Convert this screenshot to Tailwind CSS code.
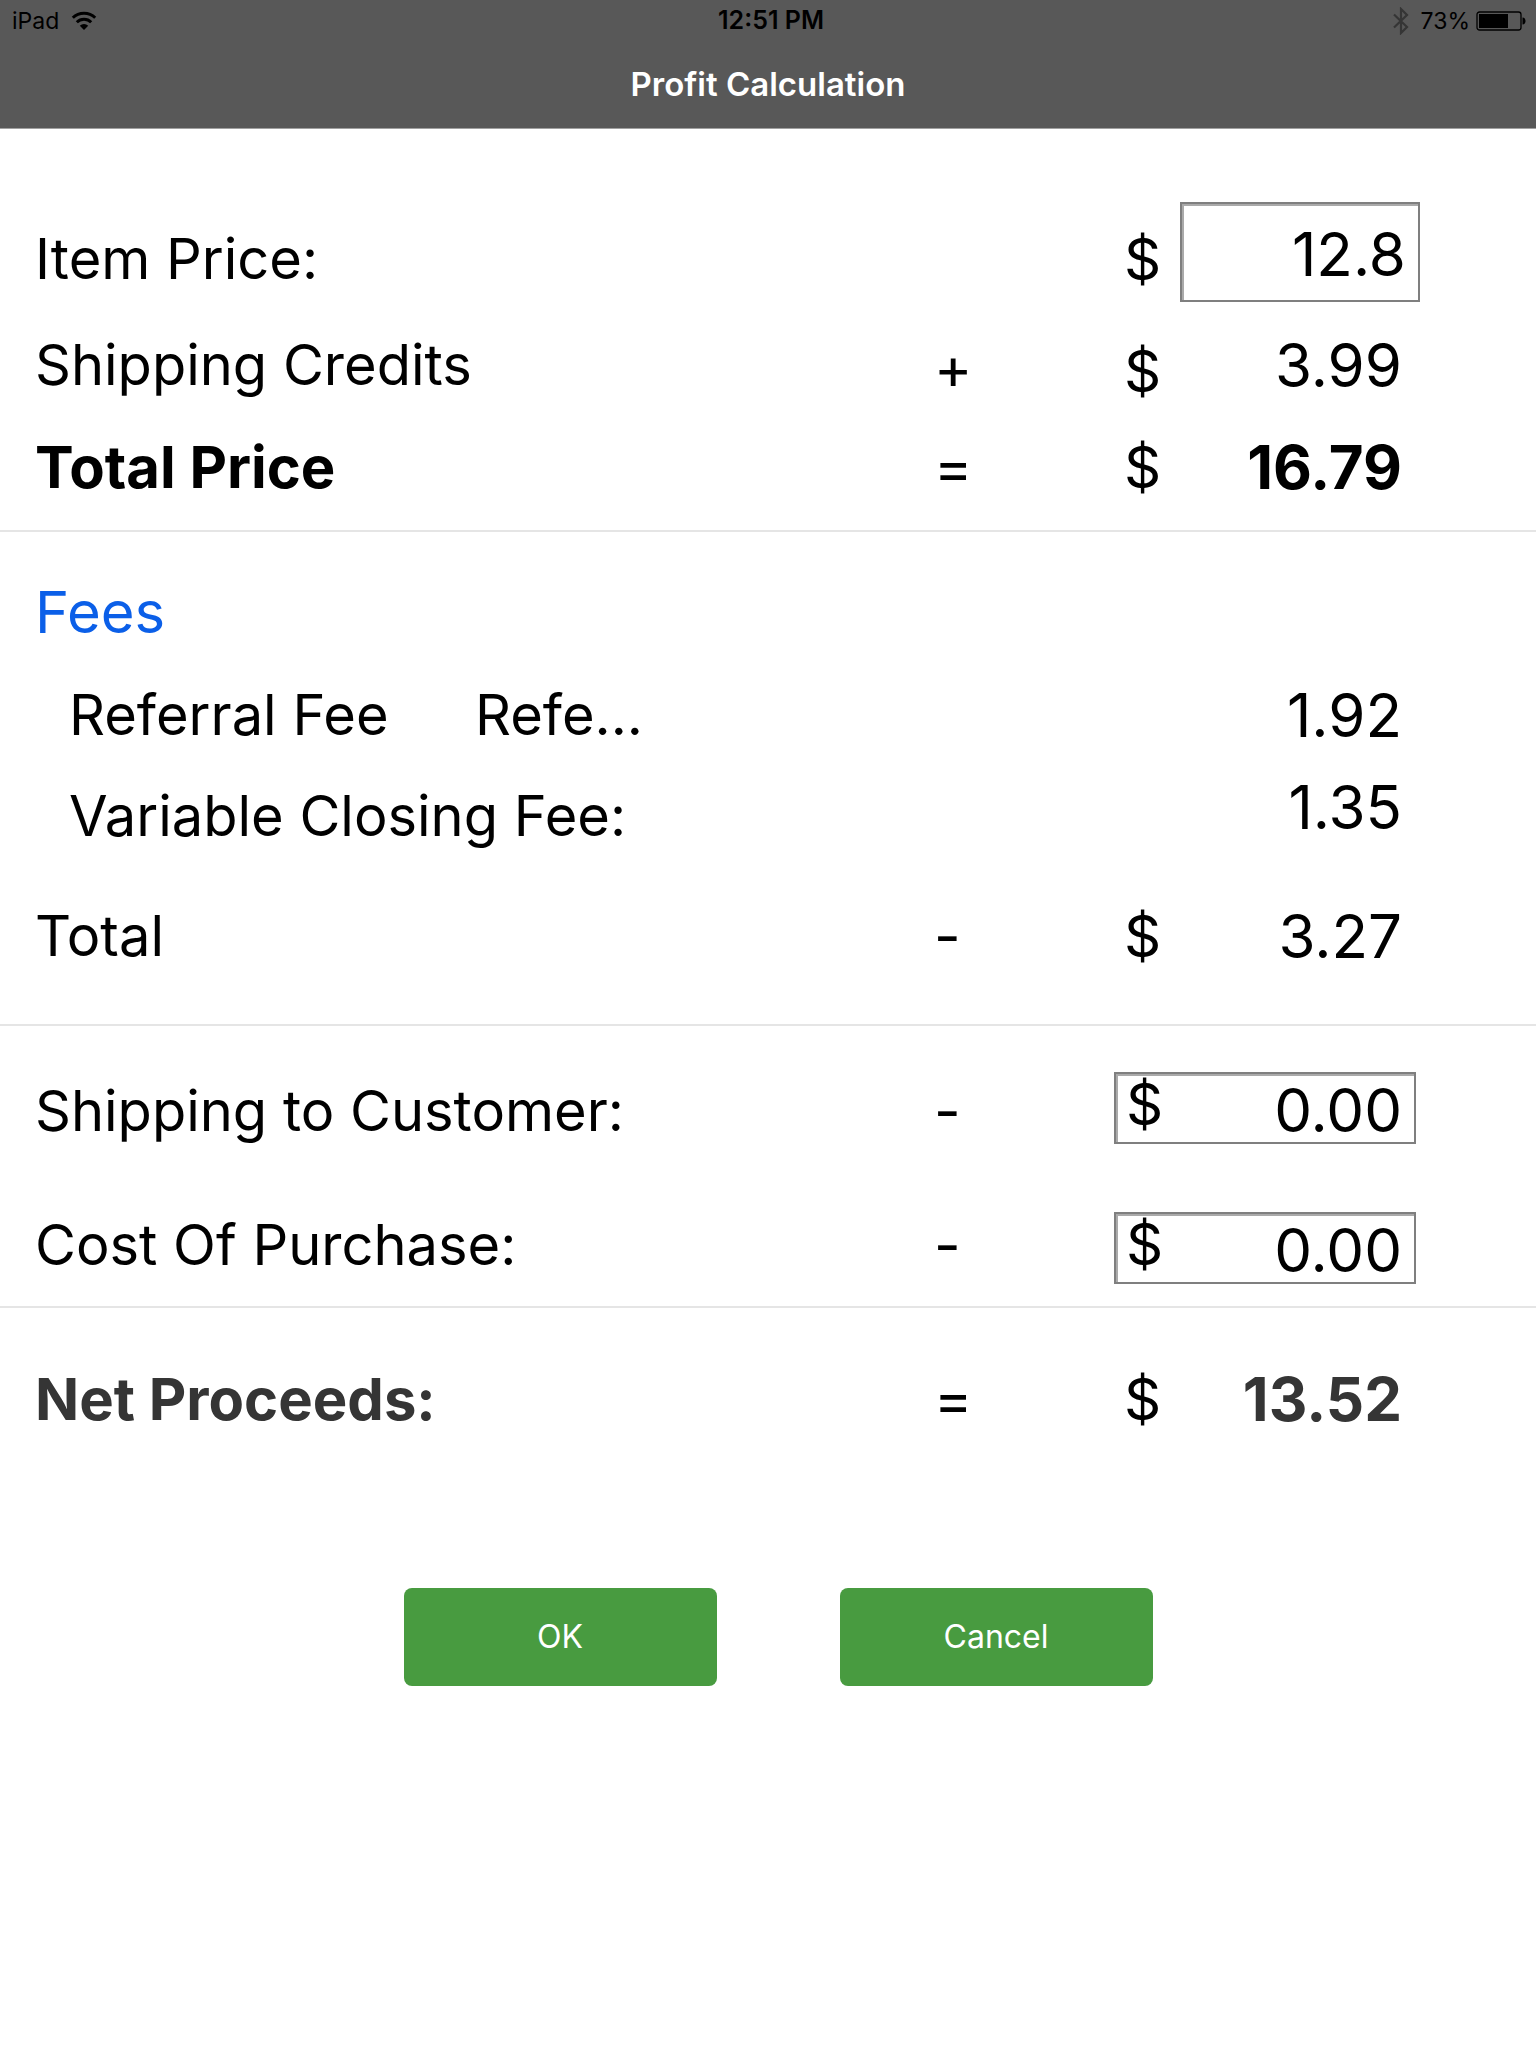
<!DOCTYPE html>
<html lang="en">
<head>
    <meta charset="UTF-8">
    <meta name="viewport" content="width=device-width, initial-scale=1.0">
    <title>Profit Calculation</title>
    <script src="https://cdn.jsdelivr.net/npm/@tailwindcss/browser@4"></script>
</head>
<body class="bg-white text-black font-['Inter','Liberation_Sans',sans-serif]">

    <header class="bg-[#585858] border-b border-[#a0a0a0]">
        <!-- Status bar -->
        <div class="grid grid-cols-[1fr_auto_1fr] items-center h-[42px] pl-3 pr-[10px] text-[23px]">
            <div class="flex items-center gap-3">
                <span>iPad</span>
                <svg class="w-[26px] h-[20px]" viewBox="0 0 26 20" fill="none" stroke="#000" stroke-width="3" aria-label="Wi-Fi">
                    <path d="M1.8 6.700a16 16 0 0 1 22.4 0"/>
                    <path d="M5.800 11.200a10.300 10.300 0 0 1 14.400 0"/>
                    <path d="M13 19l-4.200-4.300a6 6 0 0 1 8.400 0z" fill="#000" stroke="none"/>
                </svg>
            </div>
            <div class="pl-1 text-center text-[25px] font-semibold">12:51 PM</div>
            <div class="flex items-center justify-end">
                <svg class="w-4 h-[28px] mr-3" viewBox="0 0 16 28" fill="none" stroke="#353535" stroke-width="2.200" aria-label="Bluetooth">
                    <path d="M1 7.500l13 12.500-6 6V2l6 6L1 20.500"/>
                </svg>
                <span class="mr-1.5">73%</span>
                <svg class="w-[50px] h-5" viewBox="0 0 50 20" aria-label="Battery">
                    <rect x="1" y="1" width="44" height="18" rx="2.500" fill="none" stroke="#000" stroke-width="1.300"/>
                    <path d="M3 3h29v14H3z"/>
                    <path d="M46.500 6.500c4 0 4 7 0 7z"/>
                </svg>
            </div>
        </div>
        <h1 class="h-[86px] leading-[84px] text-center text-[33px] font-semibold text-white">Profit Calculation</h1>
    </header>

    <form class="text-[56px] leading-[70px]">
        <!-- Price -->
        <section class="pt-[73px] pb-7 pl-[35px] pr-[116px] border-b-2 border-[#e5e5e5]">
            <div class="grid grid-cols-[1fr_180px_66px_240px] items-center h-[114px]">
                <label for="itemPrice">Item Price:</label>
                <span></span>
                <span class="pl-2.5 text-[58px]">$</span>
                <input id="itemPrice" type="text" value="12.8" class="self-start w-full h-[100px] pt-1 pr-3 text-right text-[60px] border-2 border-[#7f7f7f] shadow-[inset_2px_2px_0_#aaaaaa] outline-none">
            </div>
            <div class="grid grid-cols-[1fr_180px_66px_240px] h-[76px] mt-[14px]">
                <span>Shipping Credits</span>
                <span class="self-center text-[58px]">+</span>
                <span class="self-end pl-2.5 text-[58px]">$</span>
                <output class="pr-[18px] text-right text-[60px]">3.99</output>
            </div>
            <div class="grid grid-cols-[1fr_180px_66px_240px] items-center h-[70px] mt-[26px]">
                <span class="text-[58px] font-bold">Total Price</span>
                <span class="text-[58px]">=</span>
                <span class="pl-2.5 text-[58px]">$</span>
                <output class="pr-[18px] text-right text-[60px] font-bold">16.79</output>
            </div>
        </section>

        <!-- Fees -->
        <section class="pt-[45px] pb-[53px] pl-[35px] pr-[116px] border-b-2 border-[#e5e5e5]">
            <h2 class="text-[58px] text-[#0b5fe8]">Fees</h2>
            <div class="flex h-[70px] mt-[33px] pl-[34px]">
                <span class="w-[406px]">Referral Fee</span>
                <span>Refe...</span>
                <output class="ml-auto pr-[18px] text-[60px]">1.92</output>
            </div>
            <div class="flex justify-between h-[79px] mt-[22px] pl-[34px]">
                <span class="self-end">Variable Closing Fee:</span>
                <output class="pr-[18px] text-[60px]">1.35</output>
            </div>
            <div class="grid grid-cols-[1fr_180px_66px_240px] items-center h-[70px] mt-[50px]">
                <span>Total</span>
                <span class="text-[58px]">-</span>
                <span class="pl-2.5 text-[58px]">$</span>
                <output class="pr-[18px] text-right text-[60px]">3.27</output>
            </div>
        </section>

        <!-- Costs -->
        <section class="pt-[46px] pb-[22px] pl-[35px] pr-[116px] border-b-2 border-[#e5e5e5]">
            <div class="grid grid-cols-[1fr_180px_306px] items-center h-[78px]">
                <label for="shippingCost">Shipping to Customer:</label>
                <span class="text-[58px]">-</span>
                <div class="relative self-start mr-1">
                    <span class="absolute left-3 top-0 text-[58px] leading-16">$</span>
                    <input id="shippingCost" type="text" value="0.00" class="block w-full h-[72px] pt-1 pr-3 text-right text-[60px] border-2 border-[#7f7f7f] shadow-[inset_2px_2px_0_#aaaaaa] outline-none">
                </div>
            </div>
            <div class="grid grid-cols-[1fr_180px_306px] items-center h-[78px] mt-14">
                <label for="purchaseCost">Cost Of Purchase:</label>
                <span class="text-[58px]">-</span>
                <div class="relative self-end mr-1">
                    <span class="absolute left-3 top-0 text-[58px] leading-16">$</span>
                    <input id="purchaseCost" type="text" value="0.00" class="block w-full h-[72px] pt-1 pr-3 text-right text-[60px] border-2 border-[#7f7f7f] shadow-[inset_2px_2px_0_#aaaaaa] outline-none">
                </div>
            </div>
        </section>

        <!-- Result -->
        <section class="pt-[56px] pl-[35px] pr-[116px]">
            <div class="grid grid-cols-[1fr_180px_66px_240px] items-center h-[70px]">
                <span class="text-[58px] font-bold text-[#353535]">Net Proceeds:</span>
                <span class="text-[58px]">=</span>
                <span class="pl-2.5 text-[58px]">$</span>
                <output class="pr-[18px] text-right text-[60px] font-bold text-[#353535]">13.52</output>
            </div>
        </section>

        <div class="flex justify-center gap-[123px] mt-[154px] pl-5 text-[32px] leading-10 text-white">
            <button type="button" class="w-[313px] h-[98px] rounded-lg bg-[#489b40]">OK</button>
            <button type="button" class="w-[313px] h-[98px] rounded-lg bg-[#489b40]">Cancel</button>
        </div>
    </form>

</body>
</html>
